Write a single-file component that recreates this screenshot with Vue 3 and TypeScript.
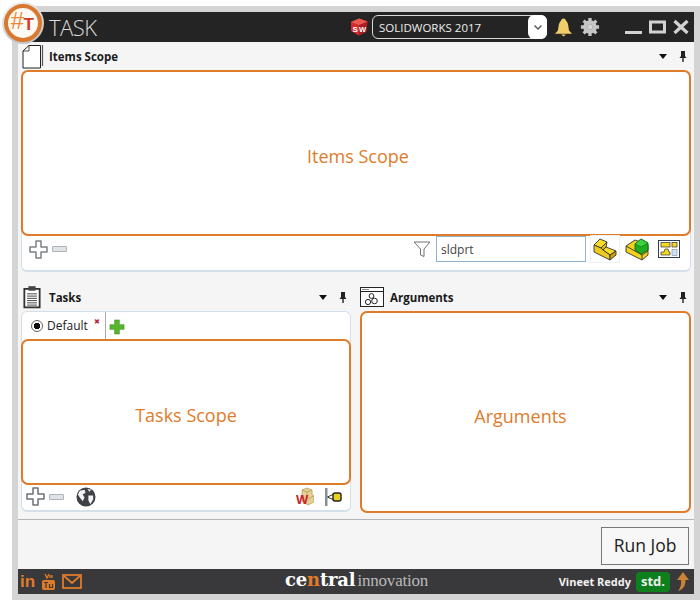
<script setup lang="ts">
import { ref } from 'vue'

const filter = ref('sldprt')
const version = ref('SOLIDWORKS 2017')
</script>

<template>
  <div class="page">
    <div class="window">
      <div class="logo">
        <div class="logo-inner">
          <span class="logo-hash">#</span><span class="logo-t">T</span>
        </div>
      </div>

      <header class="titlebar">
        <span class="app-name">TASK</span>
        <div class="title-right">
          <svg class="sw-icon" width="18" height="18" viewBox="0 0 18 18">
            <path d="M9 0.500 L17.500 3.500 L16.500 13.500 L9 17.500 L1 13 L1 4 Z" fill="#d32a2e" />
            <path d="M9 7 L17.500 3.500 L16.500 13.500 L9 17.500 Z" fill="#a81c22" />
            <path d="M1 4 L9 0.500 L17.500 3.500 L9 7 Z" fill="#e85a50" />
            <text x="2.500" y="14" font-size="8" font-weight="700" fill="#fff" font-family="Liberation Sans">S</text>
            <text x="9" y="13.500" font-size="7.500" font-weight="700" fill="#fff" font-family="Liberation Sans">W</text>
          </svg>
          <div class="version-select">
            <span>{{ version }}</span>
            <span class="chevron">
              <svg width="10" height="7" viewBox="0 0 10 7"><path d="M1.500 1.500 L5 5 L8.500 1.500" fill="none" stroke="#555" stroke-width="1.400" /></svg>
            </span>
          </div>
          <svg class="bell" width="19" height="20" viewBox="0 0 20 20">
            <path d="M10 1 C12 1 12.500 3 13 4 C15.500 6 15 11 16 14 L19 17 L1 17 L4 14 C5 11 4.500 6 7 4 C7.500 3 8 1 10 1 Z" fill="#f0cf6a" />
            <path d="M7.500 18 H12.500 L10 20 Z" fill="#f0cf6a" />
          </svg>
          <svg class="gear" width="20" height="20" viewBox="0 0 22 22">
            <circle cx="11" cy="11" r="7.500" fill="#c6c6c6" />
            <path d="M11 1 V21 M1 11 H21 M4 4 L18 18 M18 4 L4 18" stroke="#c6c6c6" stroke-width="3.600" />
            <circle cx="11" cy="11" r="3" fill="#d9d9d9" stroke="#b0b0b0" />
          </svg>
          <div class="win-buttons">
            <svg width="17" height="16" viewBox="0 0 17 16"><rect x="0" y="12" width="17" height="3" fill="#d2d2d2" /></svg>
            <svg width="17" height="16" viewBox="0 0 17 16"><rect x="1.500" y="3" width="14" height="10" fill="none" stroke="#d2d2d2" stroke-width="3" /></svg>
            <svg width="16" height="16" viewBox="0 0 16 16"><path d="M1.500 2 L14.500 14 M14.500 2 L1.500 14" stroke="#d2d2d2" stroke-width="3.200" /></svg>
          </div>
        </div>
      </header>

      <main class="content">
        <section class="items">
          <div class="pane-head">
            <svg class="head-icon" width="23" height="25" viewBox="0 0 23 25">
              <path d="M19.500 1.500 H8 L2 7 V24 H19.500 Z" fill="#fff" stroke="#222" stroke-width="1" />
              <path d="M8 1.500 V7 H2" fill="none" stroke="#222" stroke-width="0.800" />
              <path d="M21.500 1 V22" stroke="#555" stroke-width="1.200" />
            </svg>
            <span class="pane-title">Items Scope</span>
            <span class="pane-tools">
              <i class="caret"></i>
              <svg width="8" height="11" viewBox="0 0 8 11"><path d="M2 0 H6 V5 L7.500 7 H4.700 V11 H3.300 V7 H0.500 L2 5 Z" fill="#222" /></svg>
            </span>
          </div>
          <div class="card">
            <div class="scope scope-items">Items Scope</div>
            <div class="toolbar items-toolbar">
              <svg class="plus" width="19" height="19" viewBox="0 0 19 19"><path d="M7 1 H12 V7 H18 V12 H12 V18 H7 V12 H1 V7 H7 Z" fill="#fff" stroke="#7c8087" stroke-width="1.500" stroke-linejoin="round" /></svg>
              <span class="minus"></span>
              <span class="spacer"></span>
              <svg class="funnel" width="18" height="17" viewBox="0 0 18 17"><path d="M1 1 H17 L11 8 V15.500 L7.500 14 V8 Z" fill="#fff" stroke="#707070" stroke-width="1" /></svg>
              <input v-model="filter" class="filter-input" />
              <span class="cube-btn boxed">
                <svg width="24" height="23" viewBox="0 0 24 23" stroke="#333" stroke-width="0.900" stroke-linejoin="round">
                  <polygon points="1,7 7,1 14,4 8,10" fill="#f7dc2a" />
                  <polygon points="8,10 14,4 13,10 10,12" fill="#e2b818" />
                  <polygon points="10,12 13,9 23,13 17,17" fill="#f7dc2a" />
                  <polygon points="1,7 8,10 10,12 17,17 17,22 1,14" fill="#efc91e" />
                  <polygon points="17,17 23,13 23,17 17,22" fill="#caa012" />
                </svg>
              </span>
              <span class="cube-btn">
                <svg width="24" height="23" viewBox="0 0 24 23" stroke="#333" stroke-width="0.900" stroke-linejoin="round">
                  <polygon points="1,8 10,2 23,7 23,17 17,22 1,14" fill="#f2d21c" />
                  <path d="M1 8 L17 17 L17 22 M17 17 L23 13" fill="none" />
                  <polygon points="10,6 16,1 23,5 23,12 16,16 10,12" fill="#1fae1f" stroke="#0d6a0d" />
                  <polygon points="10,6 16,1 23,5 16,9" fill="#3fd13f" stroke="#0d6a0d" stroke-width="0.600" />
                </svg>
              </span>
              <span class="cube-btn">
                <svg width="22" height="18" viewBox="0 0 22 18">
                  <rect x="0.500" y="0.500" width="21" height="17" fill="#fff" stroke="#2d3b55" />
                  <rect x="3" y="2.500" width="9" height="4.500" fill="#f3d81f" stroke="#333" stroke-width="0.700" />
                  <rect x="14" y="2.500" width="5" height="4.500" fill="#f3d81f" stroke="#333" stroke-width="0.700" />
                  <path d="M3 15 V12 L6 12 L7 9 L10 9 L11 12 L12 12 V15 Z" fill="#f3d81f" stroke="#333" stroke-width="0.700" />
                  <rect x="14" y="9.500" width="5" height="6" fill="#cfe2f3" stroke="#678" stroke-width="0.500" />
                </svg>
              </span>
            </div>
          </div>
        </section>

        <section class="lower">
          <div class="tasks">
            <div class="pane-head">
              <svg class="head-icon" width="18" height="24" viewBox="0 0 20 25">
                <rect x="1.500" y="3.500" width="17" height="20.500" fill="#fff" stroke="#333" stroke-width="2" />
                <rect x="6" y="0.500" width="8" height="5" fill="#444" />
                <path d="M4.500 9 H15.500 M4.500 11.500 H15.500 M4.500 14 H15.500 M4.500 16.500 H15.500 M4.500 19 H15.500 M4.500 21.500 H15.500" stroke="#333" stroke-width="1" />
              </svg>
              <span class="pane-title">Tasks</span>
              <span class="pane-tools">
                <i class="caret"></i>
                <svg width="8" height="11" viewBox="0 0 8 11"><path d="M2 0 H6 V5 L7.500 7 H4.700 V11 H3.300 V7 H0.500 L2 5 Z" fill="#222" /></svg>
              </span>
            </div>
            <div class="card tasks-card">
              <div class="tabs">
                <div class="tab">
                  <span class="radio"></span>
                  <span>Default</span>
                  <span class="tab-close">&#x2716;</span>
                </div>
                <svg class="tab-add" width="16" height="16" viewBox="0 0 17 17">
                  <path d="M6 1 H11 V6 H16 V11 H11 V16 H6 V11 H1 V6 H6 Z" fill="#55b62b" stroke="#3a8f1c" stroke-width="0.600" />
                </svg>
              </div>
              <div class="scope scope-tasks">Tasks Scope</div>
              <div class="toolbar tasks-toolbar">
                <svg class="plus" width="19" height="19" viewBox="0 0 19 19"><path d="M7 1 H12 V7 H18 V12 H12 V18 H7 V12 H1 V7 H7 Z" fill="#fff" stroke="#6c7077" stroke-width="1.500" stroke-linejoin="round" /></svg>
                <span class="minus"></span>
                <svg class="globe" width="20" height="20" viewBox="0 0 21 21">
                  <circle cx="10.500" cy="10.500" r="10" fill="#3e4145" />
                  <path d="M4 4 L9 3 L10 6 L7 8 L9 11 L7 15 L4 11 L2 8 Z M13 9 L18 9 L18 13 L15 18 L13 14 Z M12 2 L16 3 L14 5 Z" fill="#f4f4f4" />
                </svg>
                <span class="spacer"></span>
                <svg class="wbox" width="18" height="20" viewBox="0 0 18 20">
                  <path d="M6 3 L11 1 L16 3 L16 7 L18 9 L18 15 L12 18 L6 14 Z" fill="#e6cf93" stroke="#b59a55" stroke-width="0.700" />
                  <path d="M6 3 L11 5 L16 3 M11 5 V11 M12 12 L18 9" fill="none" stroke="#b59a55" stroke-width="0.700" />
                  <text x="0" y="17" font-size="13" font-weight="700" fill="#c8242b" font-family="Liberation Sans">W</text>
                </svg>
                <svg class="joint" width="18" height="18" viewBox="0 0 18 18">
                  <rect x="1" y="0" width="2.500" height="18" fill="#8a8f96" />
                  <path d="M3.500 9 L10 6" stroke="#333" stroke-width="1" />
                  <path d="M3.500 9 L10 12" stroke="#333" stroke-width="1" />
                  <rect x="9" y="5" width="8" height="8" rx="2" fill="#e8d21d" stroke="#222" stroke-width="1.400" />
                </svg>
              </div>
            </div>
          </div>

          <div class="arguments">
            <div class="pane-head">
              <svg class="head-icon" width="24" height="20" viewBox="0 0 24 20">
                <rect x="0.500" y="0.500" width="23" height="19" fill="#fff" stroke="#222" />
                <path d="M0.500 4.500 H23.500" stroke="#222" />
                <path d="M2.500 2.500 H9" stroke="#222" stroke-dasharray="1 1" />
                <circle cx="8" cy="15" r="2.600" fill="none" stroke="#222" />
                <circle cx="14.500" cy="14" r="2.800" fill="none" stroke="#222" />
                <circle cx="11.500" cy="9" r="2.400" fill="none" stroke="#222" />
              </svg>
              <span class="pane-title">Arguments</span>
              <span class="pane-tools">
                <i class="caret"></i>
                <svg width="8" height="11" viewBox="0 0 8 11"><path d="M2 0 H6 V5 L7.500 7 H4.700 V11 H3.300 V7 H0.500 L2 5 Z" fill="#222" /></svg>
              </span>
            </div>
            <div class="scope scope-args">Arguments</div>
          </div>
        </section>

        <div class="actions">
          <button class="run-btn">Run Job</button>
        </div>
      </main>

      <footer class="footer">
        <div class="social">
          <span class="in">in</span>
          <svg width="15" height="17" viewBox="0 0 15 17">
            <rect x="1" y="7" width="13" height="10" rx="2" fill="#e07b2a" />
            <path d="M4 1 L6 5 L8 1 M9 2 V5 M11 2 V5" fill="none" stroke="#e07b2a" stroke-width="1.300" />
            <path d="M3 9.500 H7 M5 9.500 V15 M8.500 11 V14.500 H11.500 V11" fill="none" stroke="#39393b" stroke-width="1.200" />
          </svg>
          <svg width="20" height="15" viewBox="0 0 20 15">
            <rect x="1" y="1" width="18" height="13" fill="none" stroke="#e07b2a" stroke-width="1.800" />
            <path d="M1.500 1.500 L10 9 L18.500 1.500" fill="none" stroke="#e07b2a" stroke-width="1.800" />
          </svg>
        </div>
        <div class="brand">
          <span class="brand-central">ce<b>n</b>tral</span><span class="brand-inno">innovation</span>
        </div>
        <div class="user">
          <span class="user-name">Vineet Reddy</span>
          <span class="badge">std.</span>
          <svg width="14" height="19" viewBox="0 0 14 19"><path d="M8 0 L14 8 L10.500 8 C10.500 13 9 17 3 19 C6 15 6.500 12 6 8 L2 8 Z" fill="#c98236" /></svg>
        </div>
      </footer>
    </div>
  </div>
</template>

<style>
html, body {
  margin: 0;
  padding: 0;
  background: #fff;
  overflow: hidden;
}
</style>

<style scoped>
* {
  box-sizing: border-box;
}

.page {
  width: 700px;
  height: 600px;
  padding: 6px 0 0 12px;
  font-family: "Open Sans", "Noto Sans", sans-serif;
}

.window {
  position: relative;
  width: 688px;
  height: 594px;
  padding: 6px;
  background: #d4d4d4;
  display: flex;
  flex-direction: column;
}

.logo {
  position: absolute;
  left: -10px;
  top: -4px;
  width: 42px;
  height: 42px;
  border-radius: 50%;
  background: linear-gradient(160deg, #f2f2f2, #bdbdbd);
  padding: 2px;
  z-index: 2;
}

.logo-inner {
  width: 38px;
  height: 38px;
  border-radius: 50%;
  background: radial-gradient(circle, #fffaf3 0 60%, #f6e7d6 100%);
  border: 4px solid #d9782f;
  display: flex;
  align-items: center;
  justify-content: center;
  font-family: "Liberation Sans", sans-serif;
}

.logo-hash {
  color: #e8893a;
  font-size: 24px;
  font-style: italic;
  margin-top: -4px;
  margin-left: -2px;
}

.logo-t {
  color: #cf3a2b;
  font-size: 17px;
  font-weight: 700;
  margin-top: 4px;
}

.titlebar {
  height: 30px;
  flex: none;
  background: #242424;
  display: flex;
  align-items: center;
  padding-left: 31px;
}

.app-name {
  color: #dcdcdc;
  font-size: 22px;
  font-family: "Open Sans", sans-serif;
  font-weight: 300;
  letter-spacing: -0.5px;
}

.title-right {
  margin-left: auto;
  display: flex;
  align-items: center;
  height: 100%;
}

.sw-icon {
  margin-right: 4px;
}

.version-select {
  width: 175px;
  height: 24px;
  border: 1px solid #d8d8d8;
  border-radius: 6px;
  color: #eee;
  font-size: 11.5px;
  display: flex;
  align-items: center;
  justify-content: space-between;
  padding-left: 6px;
  font-family: "Open Sans", sans-serif;
}

.chevron {
  width: 19px;
  height: 24px;
  margin-right: -1px;
  background: #fff;
  border-radius: 6px;
  display: flex;
  align-items: center;
  justify-content: center;
}

.bell {
  margin-left: 7px;
}

.gear {
  margin-left: 7px;
}

.win-buttons {
  display: flex;
  align-items: center;
  gap: 7px;
  margin-left: 25px;
  margin-right: 5px;
}

.content {
  flex: 1;
  min-height: 0;
  background: #f5f5f5;
  padding: 0 3px;
  display: flex;
  flex-direction: column;
}

.pane-head {
  height: 28px;
  display: flex;
  align-items: center;
  flex: none;
}

.head-icon {
  flex: none;
  margin-right: 5px;
}

.tasks .head-icon {
  margin-left: 2px;
  margin-right: 8px;
}

.arguments .head-icon {
  margin-right: 6px;
}

.pane-title {
  font-size: 11.5px;
  font-weight: 700;
  color: #1a1a1a;
  padding-top: 1px;
}

.pane-tools {
  margin-left: auto;
  display: flex;
  align-items: center;
  gap: 12px;
  padding-right: 4px;
}

.caret {
  width: 0;
  height: 0;
  border-left: 4px solid transparent;
  border-right: 4px solid transparent;
  border-top: 5px solid #111;
}

.card {
  background: #fff;
  border: 1px solid #d5dfea;
  border-bottom-width: 2px;
  border-top: none;
  border-radius: 6px;
}

.scope {
  border: 2px solid #e07b2a;
  border-radius: 7px;
  background: #fff;
  color: #e07b2a;
  font-size: 18px;
  display: flex;
  align-items: center;
  justify-content: center;
}

.scope-items {
  height: 166px;
  margin: 0 -1px;
  padding: 6px 0 0 4px;
}

.toolbar {
  display: flex;
  align-items: center;
}

.items-toolbar {
  height: 34px;
  padding: 0 5px 8px 7px;
}

.spacer {
  flex: 1;
}

.plus {
  flex: none;
}

.minus {
  width: 15px;
  height: 6px;
  margin-left: 4px;
  background: #dfe3e8;
  border: 1px solid #aeb3ba;
  border-radius: 1px;
}

.funnel {
  margin-right: 5px;
}

.filter-input {
  width: 150px;
  height: 26px;
  border: 1px solid #8fb3cd;
  background: #fff;
  color: #444;
  font-size: 12px;
  font-family: "Open Sans", sans-serif;
  padding: 0 4px;
  margin-right: 4px;
  outline: none;
}

.cube-btn {
  width: 32px;
  height: 28px;
  display: flex;
  align-items: center;
  justify-content: center;
}

.cube-btn.boxed {
  width: 30px;
  margin-right: 1px;
  border: 1px solid #eef2f6;
}

.lower {
  margin-top: 11px;
  display: grid;
  grid-template-columns: 330px 331px;
  column-gap: 9px;
}

.tasks-card {
  border-top: 1px solid #d5dfea;
  height: 201px;
  display: flex;
  flex-direction: column;
}

.tabs {
  height: 27px;
  flex: none;
  display: flex;
  align-items: flex-end;
}

.tab {
  width: 84px;
  height: 27px;
  border-right: 1px solid #a9a9a9;
  display: flex;
  align-items: center;
  gap: 4px;
  padding-left: 9px;
  font-size: 12px;
  color: #222;
  position: relative;
}

.radio {
  width: 12px;
  height: 12px;
  border-radius: 50%;
  border: 1px solid #666;
  background: radial-gradient(circle, #111 0 3px, #fff 3.500px);
}

.tab-close {
  position: absolute;
  right: 5px;
  top: 5px;
  font-size: 7px;
  color: #b02a37;
}

.tab-add {
  margin: 0 0 4px 3px;
}

.scope-tasks {
  height: 146px;
  flex: none;
  margin: 0 -1px;
  padding-top: 6px;
}

.tasks-toolbar {
  flex: 1;
  padding: 0 8px 2px 4px;
}

.globe {
  margin-left: 12px;
}

.joint {
  margin-left: 10px;
}

.scope-args {
  height: 202px;
  padding: 8px 10px 0 0;
}

.actions {
  margin-top: 6px;
  flex: 1;
  border-top: 1px solid #b4b4b4;
  margin-left: -3px;
  margin-right: -3px;
  display: flex;
  justify-content: flex-end;
  align-items: flex-start;
  padding: 7px 5px 0 0;
}

.run-btn {
  width: 88px;
  height: 38px;
  border: 1px solid #777;
  background: #f7f7f7;
  color: #222;
  font-size: 17.5px;
  font-family: "Open Sans", sans-serif;
  padding: 0 0 3px;
}

.footer {
  height: 25px;
  flex: none;
  background: #39393b;
  display: flex;
  align-items: center;
  padding: 0 5px 0 2px;
  position: relative;
}

.social {
  display: flex;
  align-items: center;
  gap: 6px;
}

.in {
  color: #e07b2a;
  font-family: "Liberation Sans", sans-serif;
  font-weight: 700;
  font-size: 17px;
  line-height: 1;
}

.brand {
  position: absolute;
  left: 267px;
  top: 0;
  height: 25px;
  display: flex;
  align-items: baseline;
  color: #fff;
}

.brand-central {
  font-family: "DejaVu Serif", serif;
  font-weight: 700;
  font-size: 18px;
  letter-spacing: -0.2px;
}

.brand-central b {
  color: #e07b2a;
}

.brand-inno {
  font-family: "Liberation Serif", serif;
  font-size: 17px;
  color: #b9b9b9;
  margin-left: 2px;
  letter-spacing: -0.2px;
}

.user {
  margin-left: auto;
  display: flex;
  align-items: center;
}

.user-name {
  color: #f2f2f2;
  font-size: 11px;
  font-weight: 700;
}

.badge {
  margin-left: 5px;
  width: 34px;
  height: 20px;
  background: #0d7f1d;
  border-radius: 4px;
  color: #eee;
  font-size: 13px;
  font-weight: 700;
  text-align: center;
  line-height: 19px;
  margin-right: 5px;
}
</style>
